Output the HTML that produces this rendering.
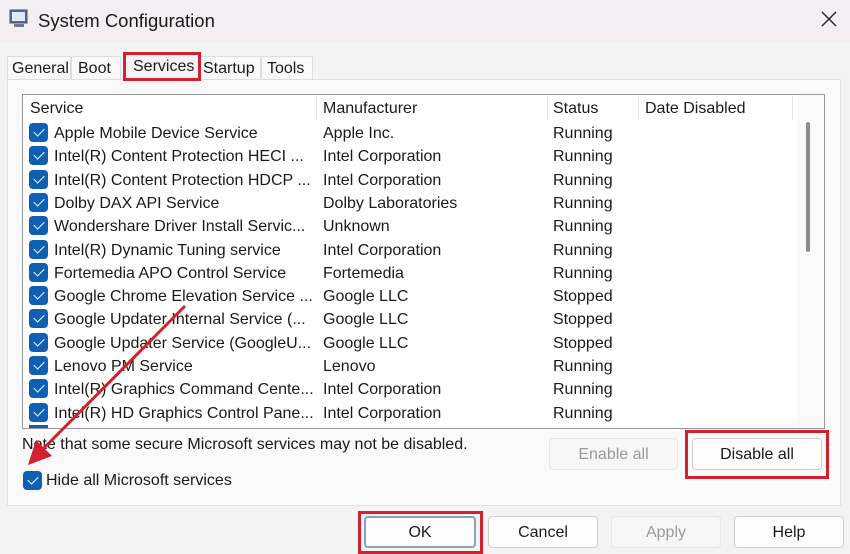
<!DOCTYPE html><html><head><style>
*{box-sizing:border-box;margin:0;padding:0}
body{width:850px;height:554px;background:#f3f3f3;font-family:"Liberation Sans",sans-serif;color:#1a1a1a;position:relative;overflow:hidden;font-size:16px}
.a{position:absolute;white-space:nowrap}
.cb{position:absolute;width:19px;height:19px;background:#0f5fb2;border-radius:4px}
.cb:after{content:"";position:absolute;left:7px;top:3px;width:5px;height:9px;border:solid #fff;border-width:0 1.5px 1.5px 0;transform:rotate(45deg)}
.btn{position:absolute;height:32px;border:1px solid #cfcfcf;border-radius:4px;background:#fdfdfd;text-align:center;line-height:32px;font-size:16px}
.red{position:absolute;border:3px solid #d3202e}
</style></head><body>
<div class="a" style="left:0;top:0;width:850px;height:42px;background:#f2eef2"></div>
<svg class="a" style="left:8px;top:8px" width="22" height="22"><rect x="2" y="2" width="17" height="13" fill="#3a6fc4" stroke="#555"/><rect x="4" y="4" width="13" height="9" fill="#dfe9f7"/><rect x="6" y="16" width="10" height="3" fill="#777"/></svg>
<div class="a" style="left:38px;top:10px;font-size:18.5px">System Configuration</div>
<svg class="a" style="left:820px;top:10px" width="18" height="18"><path d="M2 2L16 16M16 2L2 16" stroke="#222" stroke-width="1.4"/></svg>
<div class="a" style="left:7px;top:79px;width:834px;height:427px;background:#f9f9f9;border:1px solid #e2e2e2"></div>
<div class="a" style="left:7px;top:56px;width:64px;height:24px;border:1px solid #ddd;background:#f9f9f9"></div>
<div class="a" style="left:71px;top:56px;width:50px;height:24px;border:1px solid #ddd;background:#f9f9f9"></div>
<div class="a" style="left:199px;top:56px;width:62px;height:24px;border:1px solid #ddd;background:#f9f9f9"></div>
<div class="a" style="left:261px;top:56px;width:52px;height:24px;border:1px solid #ddd;background:#f9f9f9"></div>
<div class="a" style="left:12px;top:60px">General</div>
<div class="a" style="left:78px;top:60px">Boot</div>
<div class="a" style="left:133px;top:58px">Services</div>
<div class="a" style="left:203px;top:60px">Startup</div>
<div class="a" style="left:267px;top:60px">Tools</div>
<div class="red" style="left:123px;top:52px;width:78px;height:29px"></div>
<div class="a" style="left:22px;top:94px;width:803px;height:335px;background:#fff;border:1px solid #999"></div>
<div class="a" style="left:316px;top:96px;width:1px;height:24px;background:#e5e5e5"></div>
<div class="a" style="left:547px;top:96px;width:1px;height:24px;background:#e5e5e5"></div>
<div class="a" style="left:638px;top:96px;width:1px;height:24px;background:#e5e5e5"></div>
<div class="a" style="left:792px;top:96px;width:1px;height:24px;background:#e5e5e5"></div>
<div class="a" style="left:797px;top:95px;width:27px;height:333px;background:#f9f9f9"></div>
<div class="a" style="left:806px;top:122px;width:4px;height:130px;background:#8a8a8a;border-radius:2px"></div>
<div class="a" style="left:30px;top:100px">Service</div>
<div class="a" style="left:323px;top:100px">Manufacturer</div>
<div class="a" style="left:553px;top:100px">Status</div>
<div class="a" style="left:645px;top:100px">Date Disabled</div>
<div id="rows"></div>
<div class="a" style="left:22px;top:436px">Note that some secure Microsoft services may not be disabled.</div>
<div class="cb" style="left:23px;top:471px"></div>
<div class="a" style="left:46px;top:472px">Hide all Microsoft services</div>
<div class="btn" style="left:549px;top:438px;width:129px;color:#9a9a9a;background:#f6f6f6;border-color:#e6e6e6">Enable all</div>
<div class="btn" style="left:692px;top:438px;width:130px">Disable all</div>
<div class="red" style="left:685px;top:430px;width:144px;height:49px"></div>
<div class="btn" style="left:364px;top:516px;width:112px;border:2px solid #8aa0c0;line-height:30px">OK</div>
<div class="red" style="left:358px;top:511px;width:125px;height:43px"></div>
<div class="btn" style="left:488px;top:516px;width:110px">Cancel</div>
<div class="btn" style="left:611px;top:516px;width:110px;color:#9a9a9a;background:#f6f6f6;border-color:#e6e6e6">Apply</div>
<div class="btn" style="left:734px;top:516px;width:110px">Help</div>
<svg class="a" style="left:0;top:0" width="850" height="554"><line x1="185" y1="306" x2="42" y2="450" stroke="#d3202e" stroke-width="3"/><polygon points="28,465 36,440 52,456" fill="#d3202e"/></svg>
<script>
var d=[["Apple Mobile Device Service","Apple Inc.","Running"],["Intel(R) Content Protection HECI ...","Intel Corporation","Running"],["Intel(R) Content Protection HDCP ...","Intel Corporation","Running"],["Dolby DAX API Service","Dolby Laboratories","Running"],["Wondershare Driver Install Servic...","Unknown","Running"],["Intel(R) Dynamic Tuning service","Intel Corporation","Running"],["Fortemedia APO Control Service","Fortemedia","Running"],["Google Chrome Elevation Service ...","Google LLC","Stopped"],["Google Updater Internal Service (...","Google LLC","Stopped"],["Google Updater Service (GoogleU...","Google LLC","Stopped"],["Lenovo PM Service","Lenovo","Running"],["Intel(R) Graphics Command Cente...","Intel Corporation","Running"],["Intel(R) HD Graphics Control Pane...","Intel Corporation","Running"]];
var h="";d.forEach(function(r,i){var t=123+i*23.3;h+='<div class="cb" style="left:29px;top:'+t+'px"></div><div class="a" style="left:54px;top:'+(t+2)+'px">'+r[0]+'</div><div class="a" style="left:323px;top:'+(t+2)+'px">'+r[1]+'</div><div class="a" style="left:553px;top:'+(t+2)+'px">'+r[2]+'</div>';});
h+='<div class="a" style="left:29px;top:425px;width:19px;height:3px;background:#0f5fb2"></div>';
document.getElementById("rows").innerHTML=h;
</script>
</body></html>
